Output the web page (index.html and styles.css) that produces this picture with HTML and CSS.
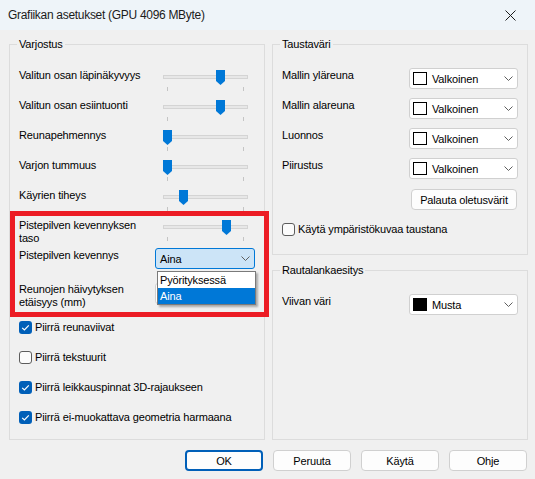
FILE: index.html
```html
<!DOCTYPE html>
<html lang="fi">
<head>
<meta charset="utf-8">
<title>Grafiikan asetukset</title>
<link rel="stylesheet" href="styles.css">
</head>
<body>
<div class="window">
  <div class="titlebar">
    <span class="title">Grafiikan asetukset (GPU 4096 MByte)</span>
    <svg class="close" width="11" height="11" viewBox="0 0 11 11"><path d="M0.5 0.5L10.5 10.5M10.5 0.5L0.5 10.5" stroke="#1b1b1b" stroke-width="1" fill="none"/></svg>
  </div>
  <div class="content">
    <div class="columns">
      <fieldset class="group left">
        <legend>Varjostus</legend>
        <div class="row">
          <span class="label">Valitun osan läpinäkyvyys</span>
          <div class="slider"><div class="track"></div><span class="tick t-min"></span><span class="tick t-max"></span><svg class="thumb" style="left:53px" width="9" height="15" viewBox="0 0 9 15"><path d="M0 0H9V11L4.5 15L0 11Z" fill="#0078d7"/></svg></div>
        </div>
        <div class="row">
          <span class="label">Valitun osan esiintuonti</span>
          <div class="slider"><div class="track"></div><span class="tick t-min"></span><span class="tick t-max"></span><svg class="thumb" style="left:53px" width="9" height="15" viewBox="0 0 9 15"><path d="M0 0H9V11L4.5 15L0 11Z" fill="#0078d7"/></svg></div>
        </div>
        <div class="row">
          <span class="label">Reunapehmennys</span>
          <div class="slider"><div class="track"></div><span class="tick t-min"></span><span class="tick t-max"></span><svg class="thumb" style="left:0px" width="9" height="15" viewBox="0 0 9 15"><path d="M0 0H9V11L4.5 15L0 11Z" fill="#0078d7"/></svg></div>
        </div>
        <div class="row">
          <span class="label">Varjon tummuus</span>
          <div class="slider"><div class="track"></div><span class="tick t-min"></span><span class="tick t-max"></span><svg class="thumb" style="left:0px" width="9" height="15" viewBox="0 0 9 15"><path d="M0 0H9V11L4.5 15L0 11Z" fill="#0078d7"/></svg></div>
        </div>
        <div class="row">
          <span class="label">Käyrien tiheys</span>
          <div class="slider"><div class="track"></div><span class="tick t-min"></span><span class="tick t-max"></span><svg class="thumb" style="left:16px" width="9" height="15" viewBox="0 0 9 15"><path d="M0 0H9V11L4.5 15L0 11Z" fill="#0078d7"/></svg></div>
        </div>
        <div class="row">
          <span class="label">Pistepilven kevennyksen<br>taso</span>
          <div class="slider"><div class="track"></div><span class="tick t-min"></span><span class="tick t-max"></span><svg class="thumb" style="left:59px" width="9" height="15" viewBox="0 0 9 15"><path d="M0 0H9V11L4.5 15L0 11Z" fill="#0078d7"/></svg></div>
        </div>
        <div class="row row-combo">
          <span class="label">Pistepilven kevennys</span>
          <div class="combo active">
            <span class="value">Aina</span>
            <svg class="chev" width="9" height="5" viewBox="0 0 9 5"><path d="M0.5 0.5L4.5 4.5L8.5 0.5" stroke="#5f5f5f" fill="none"/></svg>
            <ul class="dropdown">
              <li>Pyörityksessä</li>
              <li class="selected">Aina</li>
            </ul>
          </div>
        </div>
        <div class="row row-combo2">
          <span class="label">Reunojen häivytyksen<br>etäisyys (mm)</span>
          <div class="combo combo-low">
            <span class="value"></span>
            <svg class="chev" width="9" height="5" viewBox="0 0 9 5"><path d="M0.5 0.5L4.5 4.5L8.5 0.5" stroke="#5f5f5f" fill="none"/></svg>
          </div>
        </div>
        <div class="check-row">
          <span class="box checked"><svg width="13" height="13" viewBox="0 0 13 13"><path d="M3.2 6.8L5.4 9L9.8 4.3" fill="none" stroke="#fff" stroke-width="1.2"/></svg></span>
          <span class="label">Piirrä reunaviivat</span>
        </div>
        <div class="check-row">
          <span class="box unchecked"></span>
          <span class="label">Piirrä tekstuurit</span>
        </div>
        <div class="check-row">
          <span class="box checked"><svg width="13" height="13" viewBox="0 0 13 13"><path d="M3.2 6.8L5.4 9L9.8 4.3" fill="none" stroke="#fff" stroke-width="1.2"/></svg></span>
          <span class="label">Piirrä leikkauspinnat 3D-rajaukseen</span>
        </div>
        <div class="check-row">
          <span class="box checked"><svg width="13" height="13" viewBox="0 0 13 13"><path d="M3.2 6.8L5.4 9L9.8 4.3" fill="none" stroke="#fff" stroke-width="1.2"/></svg></span>
          <span class="label">Piirrä ei-muokattava geometria harmaana</span>
        </div>
      </fieldset>

      <div class="right-col">
        <fieldset class="group bg-group">
          <legend>Taustaväri</legend>
          <div class="row">
            <span class="label">Mallin yläreuna</span>
            <div class="combo color"><span class="swatch white"></span><span class="value">Valkoinen</span><svg class="chev" width="9" height="5" viewBox="0 0 9 5"><path d="M0.5 0.5L4.5 4.5L8.5 0.5" stroke="#5f5f5f" fill="none"/></svg></div>
          </div>
          <div class="row">
            <span class="label">Mallin alareuna</span>
            <div class="combo color"><span class="swatch white"></span><span class="value">Valkoinen</span><svg class="chev" width="9" height="5" viewBox="0 0 9 5"><path d="M0.5 0.5L4.5 4.5L8.5 0.5" stroke="#5f5f5f" fill="none"/></svg></div>
          </div>
          <div class="row">
            <span class="label">Luonnos</span>
            <div class="combo color"><span class="swatch white"></span><span class="value">Valkoinen</span><svg class="chev" width="9" height="5" viewBox="0 0 9 5"><path d="M0.5 0.5L4.5 4.5L8.5 0.5" stroke="#5f5f5f" fill="none"/></svg></div>
          </div>
          <div class="row">
            <span class="label">Piirustus</span>
            <div class="combo color"><span class="swatch white"></span><span class="value">Valkoinen</span><svg class="chev" width="9" height="5" viewBox="0 0 9 5"><path d="M0.5 0.5L4.5 4.5L8.5 0.5" stroke="#5f5f5f" fill="none"/></svg></div>
          </div>
          <div class="reset-row">
            <button class="btn reset">Palauta oletusvärit</button>
          </div>
          <div class="check-row env-row">
            <span class="box unchecked"></span>
            <span class="label">Käytä ympäristökuvaa taustana</span>
          </div>
        </fieldset>

        <fieldset class="group wire-group">
          <legend>Rautalankaesitys</legend>
          <div class="row">
            <span class="label">Viivan väri</span>
            <div class="combo color"><span class="swatch black"></span><span class="value">Musta</span><svg class="chev" width="9" height="5" viewBox="0 0 9 5"><path d="M0.5 0.5L4.5 4.5L8.5 0.5" stroke="#5f5f5f" fill="none"/></svg></div>
          </div>
        </fieldset>
      </div>
    </div>

    <div class="buttons">
      <button class="btn default">OK</button>
      <button class="btn">Peruuta</button>
      <button class="btn">Käytä</button>
      <button class="btn">Ohje</button>
    </div>
  </div>
  <div class="highlight"></div>
</div>
</body>
</html>
```

FILE: styles.css
```css
* {
  box-sizing: border-box;
}

body {
  margin: 0;
  font-family: "Liberation Sans", Arial, sans-serif;
  font-size: 11px;
  letter-spacing: -0.15px;
  color: #000;
  background: #f0f0f0;
}

.window {
  position: relative;
  width: 535px;
  height: 479px;
  overflow: hidden;
  background: #f0f0f0;
}

.titlebar {
  height: 30px;
  background: #eef4f9;
  display: flex;
  align-items: center;
  justify-content: space-between;
  padding: 0 19px 0 8px;
  color: #1b1b1b;
  font-size: 12px;
  letter-spacing: -0.3px;
}

.title {
  line-height: 16px;
}

.close {
  display: block;
}

.content {
  padding: 6px 7px 0 9px;
}

.columns {
  display: flex;
  gap: 7px;
}

.group {
  margin: 0;
  border: 1px solid #dcdcdc;
  padding: 10px 9px 5px 9px;
  min-width: 0;
}

.group legend {
  padding: 0 2px;
  margin-left: -2px;
  line-height: 16px;
}

.left {
  width: 256px;
  flex: none;
}

.right-col {
  width: 256px;
  flex: none;
  display: flex;
  flex-direction: column;
}

.bg-group {
  padding-bottom: 10px;
}

.wire-group {
  margin-top: 7px;
  flex: 1;
}

.row {
  display: flex;
  justify-content: space-between;
  align-items: flex-start;
  height: 30px;
}

.row-combo {
  height: 34px;
}

.row-combo2 {
  height: 38px;
}

.label {
  padding-top: 7px;
  line-height: 13px;
  white-space: nowrap;
}

.slider {
  position: relative;
  flex: none;
  width: 85px;
  height: 30px;
  margin-right: 7px;
}

.track {
  position: absolute;
  left: 0;
  right: 0;
  top: 13px;
  height: 4px;
  background: #e7e7e7;
  border: 1px solid #d4d4d4;
}

.tick {
  position: absolute;
  top: 25px;
  width: 1px;
  height: 4px;
  background: #c4c4c4;
}

.t-min {
  left: 4px;
}

.t-max {
  left: 80px;
}

.thumb {
  position: absolute;
  top: 8px;
  display: block;
}

.combo {
  position: relative;
  flex: none;
  width: 100px;
  height: 21px;
  margin-top: 6px;
  border: 1px solid #d0d0d0;
  border-radius: 3px;
  background: #fff;
  display: flex;
  align-items: center;
  padding: 0 4px 0 4px;
}

.combo .value {
  flex: 1;
  line-height: 14px;
}

.combo .chev {
  display: block;
  flex: none;
}

.combo.active {
  background: #cce4f7;
  border-color: #0078d7;
}

.combo-low {
  margin-top: 7px;
}

.combo.color {
  width: 109px;
  padding: 0 4px 0 3px;
}

.swatch {
  width: 14px;
  height: 13px;
  margin-right: 5px;
  border: 1px solid #000;
  flex: none;
}

.swatch.white {
  background: #fff;
}

.swatch.black {
  background: #000;
}

.dropdown {
  position: absolute;
  z-index: 5;
  left: 1px;
  top: 22px;
  width: 99px;
  margin: 0;
  padding: 0;
  list-style: none;
  background: #fff;
  border: 1px solid #7a7a7a;
  box-shadow: 2px 2px 2px rgba(0, 0, 0, 0.3);
}

.dropdown li {
  height: 16px;
  line-height: 16px;
  padding-left: 2px;
}

.dropdown li.selected {
  background: #0078d7;
  color: #fff;
}

.check-row {
  display: flex;
  align-items: flex-start;
  height: 30px;
}

.box {
  width: 13px;
  height: 13px;
  margin-top: 7px;
  margin-right: 3px;
  border-radius: 3px;
  flex: none;
}

.box svg {
  display: block;
}

.box.checked {
  background: #005fb8;
}

.box.unchecked {
  border: 1px solid #5c5c5c;
  background: #fbfbfb;
}

.reset-row {
  display: flex;
  justify-content: flex-end;
  margin-top: 7px;
}

.env-row {
  margin-top: 6px;
  height: 28px;
}

.btn {
  width: 78px;
  height: 21px;
  padding: 0;
  border: 1px solid #d0d0d0;
  border-radius: 4px;
  background: #fdfdfd;
  font-family: inherit;
  font-size: 11px;
  letter-spacing: -0.15px;
  color: #000;
}

.btn.reset {
  width: 106px;
  margin-right: 1px;
}

.btn.default {
  border: 2px solid #005fb8;
}

.buttons {
  display: flex;
  justify-content: flex-end;
  gap: 10px;
  margin-top: 10px;
  padding-right: 1px;
}

.highlight {
  position: absolute;
  left: 10px;
  top: 211px;
  width: 259px;
  height: 106px;
  border: 5px solid #ec1c24;
  pointer-events: none;
}
```
